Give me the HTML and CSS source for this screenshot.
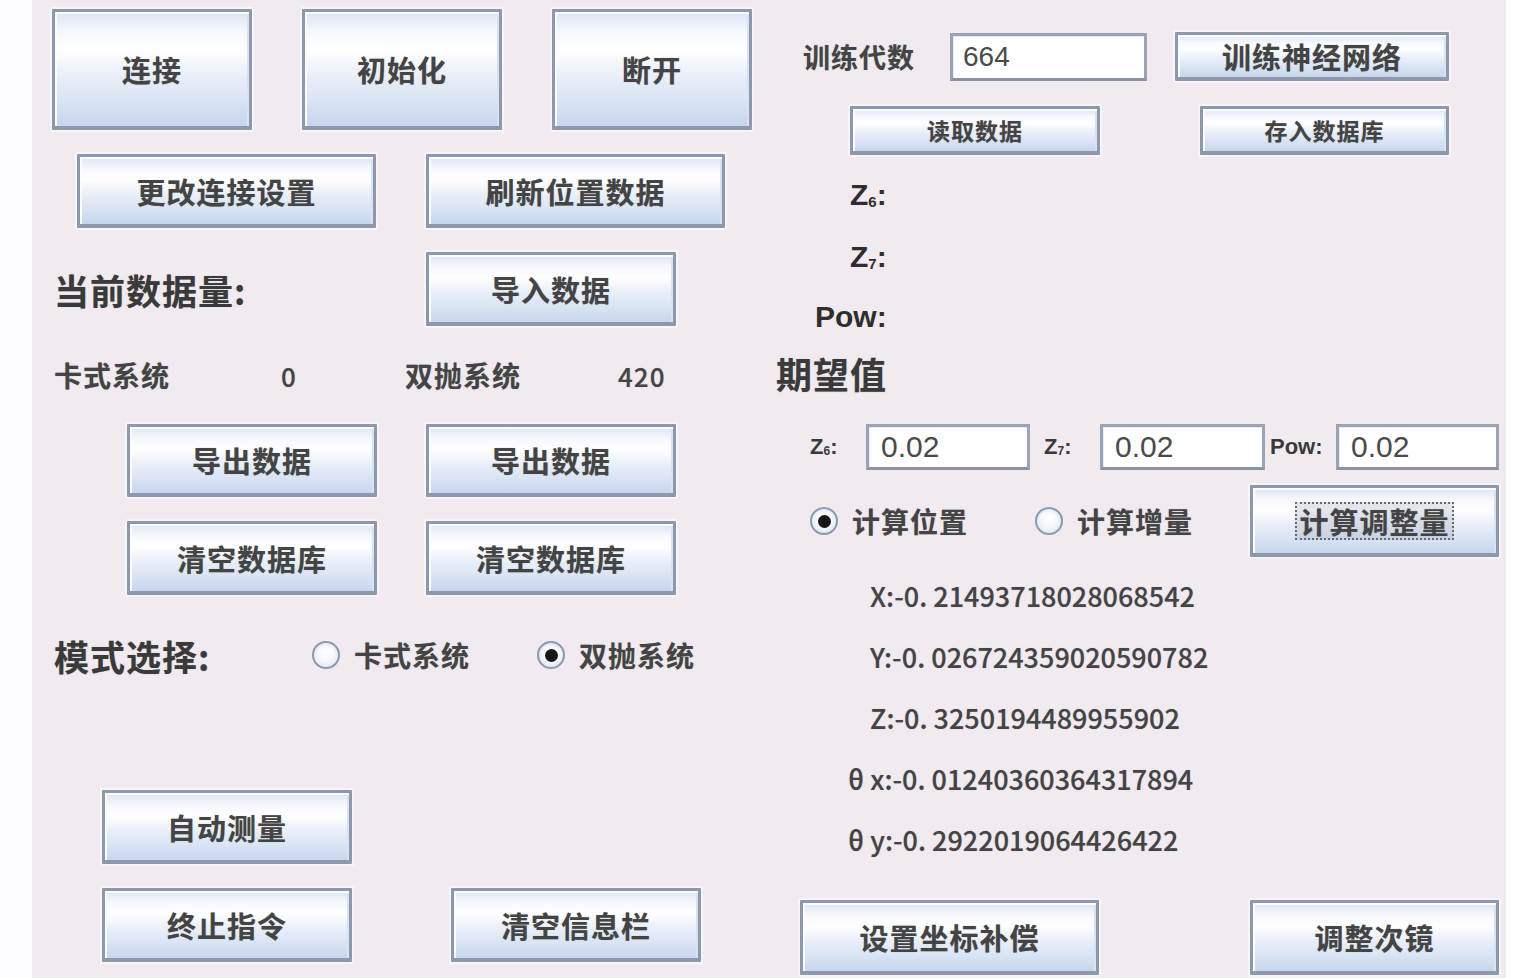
FILE: index.html
```html
<!DOCTYPE html>
<html lang="zh-CN">
<head>
<meta charset="utf-8">
<title>控制面板</title>
<link rel="stylesheet" href="styles.css">
</head>
<body>
<div class="frame">
  <div class="edge"></div>
  <div class="panel">
    <div class="left">
      <div class="row r1">
        <button class="btn w200">连接</button>
        <button class="btn w200">初始化</button>
        <button class="btn w200">断开</button>
      </div>
      <div class="row r2">
        <button class="btn w299">更改连接设置</button>
        <button class="btn w299">刷新位置数据</button>
      </div>
      <div class="row r3">
        <span class="big-label count-label">当前数据量:</span>
        <button class="btn w250">导入数据</button>
      </div>
      <div class="row r4">
        <span class="lbl c1">卡式系统</span>
        <span class="lbl num c2">0</span>
        <span class="lbl c3">双抛系统</span>
        <span class="lbl num">420</span>
      </div>
      <div class="row r5">
        <button class="btn w250">导出数据</button>
        <button class="btn w250">导出数据</button>
      </div>
      <div class="row r6">
        <button class="btn w250">清空数据库</button>
        <button class="btn w250">清空数据库</button>
      </div>
      <div class="row r7">
        <span class="big-label mode-label">模式选择:</span>
        <label class="opt mode1"><span class="radio"></span><span class="opt-text">卡式系统</span></label>
        <label class="opt"><span class="radio on"></span><span class="opt-text">双抛系统</span></label>
      </div>
      <div class="row r8">
        <button class="btn w250">自动测量</button>
      </div>
      <div class="row r9">
        <button class="btn w250">终止指令</button>
        <button class="btn w250">清空信息栏</button>
      </div>
    </div>
    <div class="right">
      <div class="row ra">
        <span class="lbl train-label">训练代数</span>
        <span class="field f197">664</span>
        <button class="btn sm w274">训练神经网络</button>
      </div>
      <div class="row rb">
        <button class="btn sm small-text w250">读取数据</button>
        <button class="btn sm small-text w249">存入数据库</button>
      </div>
      <div class="row rz6"><span class="zlabel">Z<sub>6</sub>:</span></div>
      <div class="row rz7"><span class="zlabel">Z<sub>7</sub>:</span></div>
      <div class="row rpow"><span class="zlabel">Pow:</span></div>
      <div class="row rexp"><span class="big-label exp-label">期望值</span></div>
      <div class="row rg">
        <span class="tiny zl6">Z<sub>6</sub>:</span>
        <span class="field val f164">0.02</span>
        <span class="tiny zl7">Z<sub>7</sub>:</span>
        <span class="field val f165">0.02</span>
        <span class="tiny zlp">Pow:</span>
        <span class="field val f163">0.02</span>
      </div>
      <div class="row rh">
        <label class="opt calc1"><span class="radio on"></span><span class="opt-text">计算位置</span></label>
        <label class="opt calc2"><span class="radio"></span><span class="opt-text">计算增量</span></label>
        <button class="btn w249 tall"><span class="focus">计算调整量</span></button>
      </div>
      <div class="results">
        <div class="res xyz">X:-0. 21493718028068542</div>
        <div class="res xyz">Y:-0. 026724359020590782</div>
        <div class="res xyz">Z:-0. 3250194489955902</div>
        <div class="res th">θ x:-0. 01240360364317894</div>
        <div class="res th">θ y:-0. 2922019064426422</div>
      </div>
      <div class="row rbot">
        <button class="btn w299 h75">设置坐标补偿</button>
        <button class="btn w249 h75">调整次镜</button>
      </div>
    </div>
  </div>
  <div class="edge-r"></div>
</div>
</body>
</html>
```
FILE: styles.css
```css
html, body {
  margin: 0;
  padding: 0;
  background: #ffffff;
}
body {
  font-family: "Noto Sans CJK SC", "Noto Sans", sans-serif;
  color: #333;
}
.frame {
  display: flex;
  width: 1535px;
  height: 978px;
  overflow: hidden;
}
.edge {
  width: 32px;
  flex: none;
  background: #fdfcfe;
}
.edge-r {
  flex: 1;
  background: #ffffff;
}
.panel {
  width: 1474px;
  flex: none;
  height: 978px;
  background: #f1ebf1;
  display: flex;
  overflow: hidden;
}
.left {
  width: 728px;
  flex: none;
  padding-top: 9px;
  display: flex;
  flex-direction: column;
}
.right {
  flex: 1;
  display: flex;
  flex-direction: column;
}
.row {
  display: flex;
  align-items: center;
  flex: none;
}

/* buttons */
.btn {
  box-sizing: border-box;
  flex: none;
  display: flex;
  align-items: center;
  justify-content: center;
  padding: 0;
  margin: 0;
  height: 74px;
  border: 3px solid #8d98ad;
  border-bottom-width: 4px;
  border-radius: 1px;
  background: linear-gradient(to bottom, #dde5f3 0%, #f6f8fd 18%, #ffffff 34%, #eef2fa 50%, #dbe5f4 75%, #c6d6ee 100%);
  box-shadow: inset 2px 2px 0 #fbfcff, inset -2px 0 0 #d9e2f1, 0 0 0 2px #f8f5fa;
  font-family: "Noto Sans CJK SC", sans-serif;
  font-size: 29px;
  font-weight: 700;
  color: #444;
  letter-spacing: 1px;
  text-shadow: 0 0 1px rgba(60, 60, 60, 0.35);
}
.btn.sm { height: 49px; }
.btn.small-text { font-size: 23px; }
.btn.tall { height: 72px; }
.btn.h75 { height: 75px; }
.w200 { width: 200px; }
.w250 { width: 250px; }
.w249 { width: 249px; }
.w274 { width: 274px; }
.w299 { width: 299px; }

.focus {
  border: 2px dotted #6a6a6a;
  padding: 0 2px;
  background: rgba(150, 160, 180, 0.25);
  line-height: 34px;
}

/* left rows */
.r1 { height: 121px; margin-left: 20px; gap: 50px; }
.r1 .btn { height: 121px; }
.r2 { height: 74px; margin-top: 24px; margin-left: 45px; gap: 50px; }
.r3 { height: 74px; margin-top: 24px; margin-left: 22px; }
.count-label { width: 372px; font-weight: 500; }
.r4 { height: 98px; margin-left: 22px; }
.c1 { width: 227px; }
.c2 { width: 124px; }
.c3 { width: 213px; }
.r5 { height: 73px; margin-left: 95px; gap: 49px; }
.r5 .btn { height: 73px; }
.r6 { height: 74px; margin-top: 24px; margin-left: 95px; gap: 49px; }
.r7 { height: 60px; margin-top: 30px; margin-left: 22px; }
.mode-label { width: 258px; }
.mode1 { width: 225px; }
.r8 { height: 74px; margin-top: 105px; margin-left: 70px; }
.r9 { height: 74px; margin-top: 24px; margin-left: 70px; gap: 99px; }

.big-label {
  font-size: 35px;
  font-weight: 700;
  color: #3a3a3a;
  letter-spacing: 1px;
  white-space: nowrap;
  text-shadow: 0 0 1px rgba(60, 60, 60, 0.35);
}
.lbl {
  font-size: 28px;
  font-weight: 700;
  color: #444;
  white-space: nowrap;
  letter-spacing: 1px;
  text-shadow: 0 0 1px rgba(60, 60, 60, 0.35);
}
.lbl.num {
  font-size: 26px;
  font-weight: 500;
  color: #444;
}

/* radios */
.opt {
  display: flex;
  align-items: center;
  gap: 14px;
  flex: none;
}
.radio {
  box-sizing: border-box;
  width: 28px;
  height: 28px;
  border-radius: 50%;
  border: 2px solid #8d99ad;
  background: radial-gradient(circle at 50% 40%, #ffffff 0%, #f3f6fb 50%, #d3ddeb 100%);
  box-shadow: inset 0 0 0 2px #e9eef6;
  display: flex;
  align-items: center;
  justify-content: center;
  flex: none;
}
.radio.on::after {
  content: "";
  width: 13px;
  height: 13px;
  border-radius: 50%;
  background: #161616;
}
.opt-text {
  font-size: 28px;
  font-weight: 700;
  color: #444;
  white-space: nowrap;
  letter-spacing: 1px;
  text-shadow: 0 0 1px rgba(60, 60, 60, 0.35);
}

/* right rows */
.ra { height: 49px; margin-top: 32px; margin-left: 43px; }
.train-label { width: 147px; font-size: 27px; }
.field {
  box-sizing: border-box;
  flex: none;
  display: flex;
  align-items: center;
  height: 48px;
  background: #ffffff;
  border: 3px solid #9aa3b6;
  border-bottom-color: #8a93a6;
  box-shadow: inset 1px 1px 0 #e8ebf1;
  padding-left: 10px;
  font-family: "Liberation Sans", "Noto Sans", sans-serif;
  font-size: 28px;
  color: #4a4a4a;
}
.f197 { width: 197px; margin-right: 28px; }
.rb { height: 49px; margin-top: 25px; margin-left: 90px; gap: 100px; }
.zlabel {
  font-family: "Liberation Sans", "Noto Sans", sans-serif;
  font-size: 30px;
  font-weight: 700;
  color: #2e2e2e;
  white-space: nowrap;
}
.zlabel sub {
  font-size: 15px;
  vertical-align: -2px;
}
.rz6 { height: 40px; margin-top: 20px; margin-left: 90px; }
.rz7 { height: 40px; margin-top: 22px; margin-left: 90px; }
.rpow { height: 40px; margin-top: 20px; margin-left: 55px; }
.rexp { height: 40px; margin-top: 16px; margin-left: 16px; }
.exp-label { font-size: 36px; }

.rg { height: 46px; margin-top: 31px; margin-left: 50px; }
.rg .field { height: 46px; font-size: 30px; padding-left: 12px; }
.tiny {
  font-family: "Liberation Sans", "Noto Sans", sans-serif;
  font-size: 22px;
  font-weight: 700;
  color: #3a3a3a;
  white-space: nowrap;
  flex: none;
}
.tiny sub { font-size: 12px; vertical-align: -1px; }
.zl6 { width: 56px; }
.f164 { width: 164px; margin-right: 14px; }
.zl7 { width: 56px; }
.f165 { width: 165px; margin-right: 5px; }
.zlp { width: 66px; }
.f163 { width: 163px; }

.rh { height: 72px; margin-top: 15px; margin-left: 50px; }
.calc1 { width: 225px; }
.calc2 { width: 215px; }

.results {
  margin-top: 8px;
  display: flex;
  flex-direction: column;
}
.res {
  height: 61px;
  line-height: 61px;
  font-family: "Noto Sans CJK SC", sans-serif;
  font-size: 27px;
  font-weight: 500;
  color: #444;
  white-space: nowrap;
  text-shadow: 0 0 1px rgba(60, 60, 60, 0.3);
}
.res.xyz { margin-left: 110px; }
.res.th { margin-left: 88px; }

.rbot { height: 75px; margin-top: 30px; margin-left: 40px; gap: 151px; }
```
